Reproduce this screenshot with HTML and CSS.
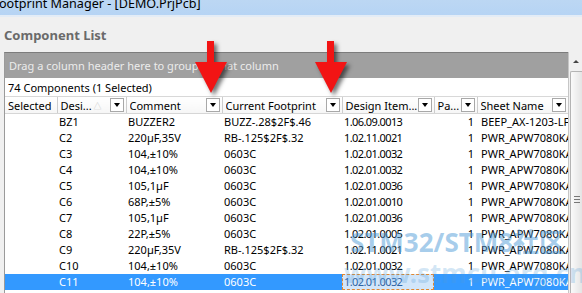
FILE: index.html
```html
<!DOCTYPE html>
<html lang="en">

<head>
	<meta charset="utf-8">
	<title>Footprint Manager - [DEMO.PrjPcb]</title>
	<link rel="stylesheet" href="styles.css">
</head>

<body>
	<div class="titlebar"><span class="title-text">ootprint Manager - [DEMO.PrjPcb]</span></div>
	<div class="panel">
		<h2 class="panel-title">Component List</h2>
		<div class="grid-area">
			<div class="grid">
				<div class="group-panel">Drag a column header here to group by that column</div>
				<div class="summary">74 Components (1 Selected)</div>
				<table class="cmp-table">
					<colgroup>
						<col style="width: 52px">
						<col style="width: 69px">
						<col style="width: 96px">
						<col style="width: 120px">
						<col style="width: 92px">
						<col style="width: 43px">
						<col style="width: 91px">
					</colgroup>
					<thead>
						<tr>
							<th><div class="th-in"><span class="th-label">Selected</span></div></th>
							<th><div class="th-in"><span class="th-label">Desi...</span><span class="sort">&#9651;</span><span class="dd"></span></div></th>
							<th><div class="th-in"><span class="th-label">Comment</span><span class="dd"></span></div></th>
							<th><div class="th-in"><span class="th-label">Current Footprint</span><span class="dd"></span></div></th>
							<th><div class="th-in"><span class="th-label">Design Item...</span><span class="dd"></span></div></th>
							<th><div class="th-in"><span class="th-label">Pa...</span><span class="dd"></span></div></th>
							<th><div class="th-in"><span class="th-label">Sheet Name</span><span class="dd"></span></div></th>
						</tr>
					</thead>
					<tbody id="rows"></tbody>
				</table>
			</div>
			<div class="vscroll">
				<div class="vs-up"></div>
				<div class="vs-thumb"><div class="vs-grip"></div></div>
			</div>
		</div>
	</div>

	<svg class="arrows" width="582" height="120" viewBox="0 0 582 120">
		<polygon points="207,41 214,41 214,62 227,62 211,93 195,62 207,62" />
		<polygon points="327,41 334,41 334,62 347,62 331,93 315,62 327,62" />
	</svg>

	<div class="watermark">
		<div class="wm-big">STM32/STM8社区</div>
		<div class="wm-url">www.stmcu.org.cn</div>
	</div>

	<script>
		const data = [
			['BZ1', 'BUZZER2', 'BUZZ-.28$2F$.46', '1.06.09.0013', '1', 'BEEP_AX-1203-LF.SchDoc'],
			['C2', '220µF,35V', 'RB-.125$2F$.32', '1.02.11.0021', '1', 'PWR_APW7080KAI.SchDoc'],
			['C3', '104,±10%', '0603C', '1.02.01.0032', '1', 'PWR_APW7080KAI.SchDoc'],
			['C4', '104,±10%', '0603C', '1.02.01.0032', '1', 'PWR_APW7080KAI.SchDoc'],
			['C5', '105,1µF', '0603C', '1.02.01.0036', '1', 'PWR_APW7080KAI.SchDoc'],
			['C6', '68P,±5%', '0603C', '1.02.01.0010', '1', 'PWR_APW7080KAI.SchDoc'],
			['C7', '105,1µF', '0603C', '1.02.01.0036', '1', 'PWR_APW7080KAI.SchDoc'],
			['C8', '22P,±5%', '0603C', '1.02.01.0005', '1', 'PWR_APW7080KAI.SchDoc'],
			['C9', '220µF,35V', 'RB-.125$2F$.32', '1.02.11.0021', '1', 'PWR_APW7080KAI.SchDoc'],
			['C10', '104,±10%', '0603C', '1.02.01.0032', '1', 'PWR_APW7080KAI.SchDoc'],
			['C11', '104,±10%', '0603C', '1.02.01.0032', '1', 'PWR_APW7080KAI.SchDoc']
		];

		const tbody = document.getElementById('rows');
		data.forEach((r, i) => {
			const tr = document.createElement('tr');
			if (i === data.length - 1) tr.className = 'selected';
			tr.innerHTML = '<td></td>' +
				'<td>' + r[0] + '</td>' +
				'<td>' + r[1] + '</td>' +
				'<td>' + r[2] + '</td>' +
				'<td class="num' + (i === data.length - 1 ? ' focus' : '') + '">' + r[3] + '</td>' +
				'<td class="qty">' + r[4] + '</td>' +
				'<td>' + r[5] + '</td>';
			tbody.appendChild(tr);
		});
	</script>
</body>

</html>
```

FILE: styles.css
```css
html,
body {
	margin: 0;
	padding: 0;
	height: 100%;
	overflow: hidden;
}

body {
	position: relative;
	background: #f0f0f0;
	font-family: "Noto Sans", "Noto Sans CJK SC", sans-serif;
	font-size: 11px;
	color: #000;
}

.titlebar {
	height: 15px;
	overflow: hidden;
	background: linear-gradient(#bcd7f3, #b6d4f4);
	border-bottom: 2px solid #e3ecf6;
}

.title-text {
	display: block;
	margin: -5px 0 0 -1px;
	font-size: 12.6px;
	line-height: 18px;
	white-space: nowrap;
}

.panel {
	padding-left: 4px;
}

.panel-title {
	margin: 0;
	height: 35px;
	display: flex;
	align-items: center;
	font-size: 13px;
	font-weight: bold;
	color: #6a6a6a;
}

.grid-area {
	display: flex;
}

.grid {
	width: 563px;
	border-left: 1px solid #9a9a9a;
	border-top: 1px solid #7c7c7c;
	background: #fff;
}

.group-panel {
	height: 25px;
	display: flex;
	align-items: center;
	padding-left: 4px;
	background: #a0a0a0;
	color: #ececec;
	white-space: nowrap;
}

.summary {
	height: 18px;
	display: flex;
	align-items: center;
	padding-left: 3px;
	border-bottom: 1px solid #d8d8d8;
	white-space: nowrap;
}

.cmp-table {
	table-layout: fixed;
	border-collapse: collapse;
	width: 563px;
}

.cmp-table th {
	height: 16px;
	padding: 0;
	font-weight: normal;
	text-align: left;
	border-left: 1px solid #cdcdcd;
	border-bottom: 1px solid #d6d6d6;
	background: linear-gradient(#ffffff, #f6f6f6);
}

.cmp-table th:first-child {
	border-left: none;
}

.th-in {
	display: flex;
	align-items: center;
	height: 16px;
	padding: 0 2px 0 3px;
	white-space: nowrap;
}

.th-label {
	flex: 1;
	overflow: hidden;
}

.sort {
	color: #c8c8c8;
	font-size: 8px;
	margin-right: 8px;
}

.dd {
	position: relative;
	width: 12px;
	height: 12px;
	border: 1px solid #a8a8a8;
	background: #fff;
	flex-shrink: 0;
}

.dd::after {
	content: "";
	position: absolute;
	left: 3px;
	top: 4px;
	border-left: 3px solid transparent;
	border-right: 3px solid transparent;
	border-top: 4px solid #000;
}

.cmp-table td {
	height: 16px;
	padding: 0 2px;
	white-space: nowrap;
	overflow: hidden;
	line-height: 16px;
}

.cmp-table td.num {
	letter-spacing: -0.6px;
}

.cmp-table td.qty {
	text-align: right;
	padding-right: 3px;
}

.cmp-table td:last-child {
	padding-left: 4px;
}

.cmp-table tr.selected td {
	background: #3399ff;
	color: #fff;
}

.cmp-table tr.selected td.focus {
	background: #d2e6fa;
	color: #2e63a3;
	outline: 1px dashed #e2872e;
	outline-offset: -1px;
}

.vscroll {
	width: 13px;
	border-left: 1px solid #c6c6c6;
	background: #f0f0f0;
	display: flex;
	flex-direction: column;
	height: 241px;
}

.vs-up {
	position: relative;
	height: 19px;
}

.vs-up::after {
	content: "";
	position: absolute;
	left: 4px;
	top: 8px;
	border-left: 3px solid transparent;
	border-right: 3px solid transparent;
	border-bottom: 3px solid #444;
}

.vs-thumb {
	flex: 1;
	margin-left: 1px;
	border: 1px solid #b4b4b4;
	border-right: none;
	border-bottom: none;
	border-radius: 2px 0 0 0;
	background: linear-gradient(90deg, #fafafa, #e4e4e4);
	display: flex;
	justify-content: center;
	padding-top: 124px;
}

.vs-grip {
	width: 6px;
	height: 5px;
	border-top: 1px solid #777;
	border-bottom: 1px solid #777;
	position: relative;
}

.vs-grip::after {
	content: "";
	position: absolute;
	left: 0;
	right: 0;
	top: 2px;
	border-top: 1px solid #777;
}

.arrows {
	position: absolute;
	left: 0;
	top: 0;
	fill: #f21414;
	filter: drop-shadow(3px 3px 2px rgba(0, 0, 0, 0.55));
	pointer-events: none;
}

.watermark {
	position: absolute;
	left: 350px;
	top: 226px;
	font-weight: bold;
	color: rgba(80, 155, 215, 0.5);
	white-space: nowrap;
	pointer-events: none;
}

.wm-big {
	font-size: 26px;
	line-height: 32px;
}

.wm-url {
	font-size: 26px;
	line-height: 30px;
	margin-left: -6px;
	color: rgba(80, 155, 215, 0.25);
}
```
